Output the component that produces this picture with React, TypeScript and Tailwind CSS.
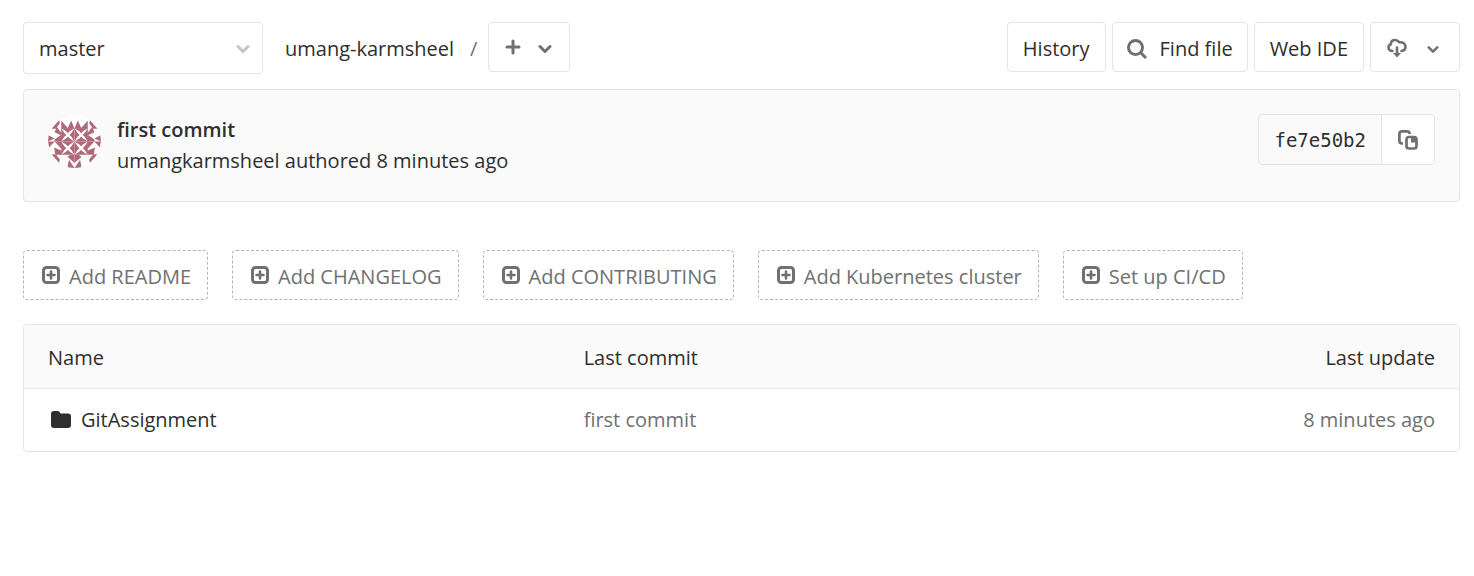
import React from "react";

const btn =
  "flex h-[50px] items-center rounded border border-[#e5e5e5] bg-white text-[#2e2e2e]";

function Chevron({ className = "" }: { className?: string }) {
  return (
    <svg viewBox="0 0 14 10" className={className} fill="none" stroke="currentColor" strokeWidth="3" strokeLinecap="round" strokeLinejoin="round" aria-hidden="true">
      <path d="M2 2.5l5 5 5-5" />
    </svg>
  );
}

function PlusSquare() {
  return (
    <svg viewBox="0 0 18 18" className="size-[18px]" fill="none" stroke="currentColor" aria-hidden="true">
      <rect x="1.5" y="1.5" width="15" height="15" rx="3" strokeWidth="3" />
      <path d="M9 5.5v7M5.5 9h7" strokeWidth="2.6" strokeLinecap="round" />
    </svg>
  );
}

const star = "M0 0H13L8.3 3L6.5 5L4.7 3zM13 0V13L10 8.3L8 6.5L10 4.7zM13 13H0L4.7 10L6.5 8L8.3 10zM0 13V0L3 4.7L5 6.500L3 8.300z";
const half = "M13 13.500V5.500L20 13.500zM19 13.500L22.800 5.500L26 13.500zM13.500 19V26H6L6.500 24zM13.500 20L6.500 17L8.500 11.500L13.500 18zM0 19.500l6.500 3.500-6.500 3zM3.500 13.500L11 5L11.500 8.500L7.500 13.500z";
const lower = "M13.500 26V33.500L6.500 26zM0 26H6.500L1 32zM6 32L13.500 35V39H7zM3.500 38.500L11 47L11.500 43.500L7.500 38.500zM19 41L22 39H26V47zM19 52L20.500 44L26 52z";

function Avatar() {
  return (
    <svg viewBox="0 0 52 52" className="size-[53px] shrink-0 rounded-full bg-white" fill="#b0697a" role="img" aria-label="umangkarmsheel">
      {[[13, 13], [26, 13], [13, 26], [26, 26]].map(([x, y]) => (
        <path key={`${x}-${y}`} d={star} transform={`translate(${x} ${y})`} />
      ))}
      <path d={half} />
      <path d={half} transform="translate(52 0) scale(-1 1)" />
      <path d={lower} />
      <path d={lower} transform="translate(52 0) scale(-1 1)" />
    </svg>
  );
}

const actions = ["Add README", "Add CHANGELOG", "Add CONTRIBUTING", "Add Kubernetes cluster", "Set up CI/CD"];

export default function App() {
  return (
    <main className="bg-white pt-[22px] pr-[14px] pl-[23px] font-['Open_Sans','Noto_Sans',sans-serif] text-[20px] leading-[30px] text-[#2e2e2e]">
      <div className="flex items-start justify-between">
        <div className="flex items-start">
          <button type="button" className="flex h-[52px] w-[240px] items-center justify-between rounded border border-[#e5e5e5] pt-0.5 pr-3 pl-[15px]">
            master
            <Chevron className="h-[10px] w-[14px] text-[#c4c4c4]" />
          </button>
          <nav className="ml-[22px] flex h-[52px] items-center pt-0.5">
            <a href="#root">umang-karmsheel</a>
            <span className="mr-[11px] ml-4 text-[#707070]">/</span>
          </nav>
          <button type="button" aria-label="Add to tree" className={`${btn} w-[82px] gap-[17px] pl-4 text-[#707070]`}>
            <svg viewBox="0 0 16 16" className="size-4" stroke="#707070" strokeWidth="3" strokeLinecap="round" aria-hidden="true">
              <path d="M8 2v12M2 8h12" />
            </svg>
            <Chevron className="mt-1 h-[10px] w-[14px] text-[#707070]" />
          </button>
        </div>
        <div className="flex gap-[6px]">
          <a href="#history" className={`${btn} px-[15px] pt-1`}>History</a>
          <a href="#find" className={`${btn} gap-[13px] px-[14px] pt-1`}>
            <svg viewBox="0 0 20 20" className="size-5" fill="none" stroke="#707070" strokeWidth="3" aria-hidden="true">
              <circle cx="8.5" cy="8.5" r="7" />
              <path d="M13.5 13.5l5.5 5.5" />
            </svg>
            Find file
          </a>
          <button type="button" className={`${btn} px-[15px] pt-1`}>Web IDE</button>
          <button type="button" aria-label="Download" className={`${btn} w-[90px] gap-[20px] pt-0.5 pl-4`}>
            <svg viewBox="0 0 20 20" className="size-5" fill="none" stroke="#707070" strokeWidth="2.6" strokeLinecap="round" aria-hidden="true">
              <path d="M5.5 13C3 13 1.5 11.6 1.5 9.5C1.5 7.7 2.5 6.6 3.8 6.2C4 3.2 5.8 2 8 2C10.2 2 11.3 2.8 12.3 4.3C16 3.8 18.5 5.8 18.5 8.6C18.5 11.2 17 12.9 14.5 13M10 9.5v6" />
              <path d="M6 15h8L10 19.5z" fill="#707070" stroke="none" />
            </svg>
            <Chevron className="mt-0.5 h-[9px] w-3 text-[#707070]" />
          </button>
        </div>
      </div>

      <section className="mt-[15px] flex h-[113px] items-start justify-between rounded border border-[#e5e5e5] bg-[#fafafa] px-6 pt-6">
        <div className="flex gap-4">
          <div className="pt-px"><Avatar /></div>
          <div className="leading-[31px]">
            <a href="#commit" className="block font-semibold">first commit</a>
            <p>umangkarmsheel authored 8 minutes ago</p>
          </div>
        </div>
        <div className="flex h-[51px] overflow-hidden rounded border border-[#e5e5e5]">
          <code className="flex items-center px-[15px] font-['DejaVu_Sans_Mono',monospace] text-[19px]">fe7e50b2</code>
          <button type="button" aria-label="Copy commit SHA" className="flex w-[53px] items-center justify-center border-l border-[#e5e5e5] bg-white">
            <svg viewBox="0 0 20 20" className="size-5" fill="none" stroke="#707070" strokeWidth="2.7" strokeLinejoin="round" aria-hidden="true">
              <path d="M5 13.5H4A2.7 2.7 0 0 1 1.4 10.8V4A2.7 2.7 0 0 1 4 1.4H9A2.7 2.7 0 0 1 11.7 4" />
              <rect x="8.5" y="7" width="10" height="11.5" rx="2.5" />
              <path d="M13 7v5.5h5.5V9.5L16 7z" fill="#707070" stroke="none" />
            </svg>
          </button>
        </div>
      </section>

      <ul className="mt-12 flex gap-6">
        {actions.map((a) => (
          <li key={a}>
            <a href="#add" className="flex h-[50px] items-center gap-[9px] rounded border border-dashed border-[#b5b5b5] pr-4 pl-[18px] text-[#707070]">
              <PlusSquare />
              <span className="pt-[3px]">{a}</span>
            </a>
          </li>
        ))}
      </ul>

      <div className="mt-6 overflow-hidden rounded border border-[#e5e5e5]">
        <table className="w-full table-fixed text-left">
          <thead>
            <tr className="h-[63px] border-b border-[#e5e5e5] bg-[#fafafa]">
              <th className="w-[39%] pt-[3px] pl-6 font-normal">Name</th>
              <th className="pt-[3px] font-normal">Last commit</th>
              <th className="pt-[3px] pr-6 text-right font-normal">Last update</th>
            </tr>
          </thead>
          <tbody>
            <tr className="h-[63px]">
              <td className="pl-[27px]">
                <a href="#folder" className="flex items-center gap-[10px]">
                  <svg viewBox="0 0 20 17" className="h-[17px] w-5" fill="#2e2e2e" aria-hidden="true">
                    <path d="M0 3a3 3 0 0 1 3-3h3.5a3 3 0 0 1 3 2.5H17a3 3 0 0 1 3 3V14a3 3 0 0 1-3 3H3a3 3 0 0 1-3-3z" />
                  </svg>
                  GitAssignment
                </a>
              </td>
              <td className="text-[#707070]"><a href="#commit">first commit</a></td>
              <td className="pr-6 text-right text-[#707070]">8 minutes ago</td>
            </tr>
          </tbody>
        </table>
      </div>
    </main>
  );
}
